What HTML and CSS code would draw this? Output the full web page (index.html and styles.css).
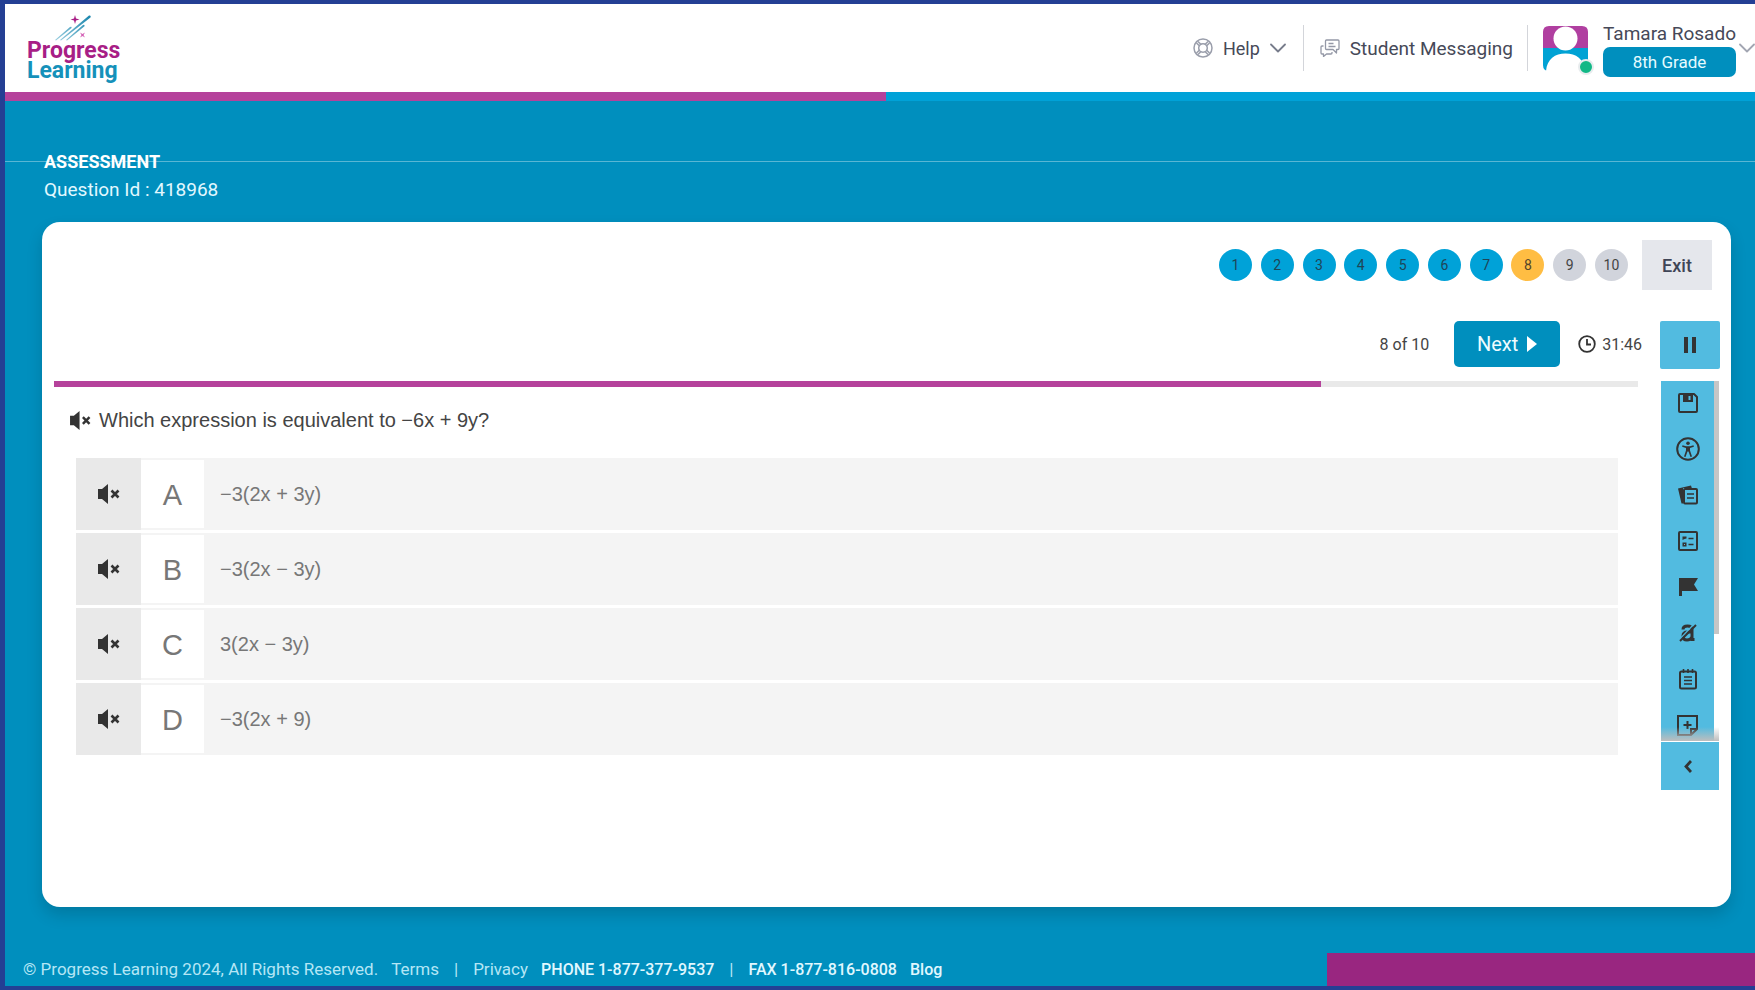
FILE: index.html
```html
<!DOCTYPE html>
<html lang="en">
<head>
<meta charset="utf-8">
<title>Progress Learning - Assessment</title>
<link rel="stylesheet" href="styles.css">
</head>
<body>
<svg class="defs" aria-hidden="true">
  <symbol id="mute" viewBox="0 0 22 20">
    <path fill="#333" d="M0 5h4l6-5v20l-6-5H0z"/>
    <path stroke="#333" stroke-width="2.6" fill="none" d="M13.500 6.500l7 7M20.500 6.500l-7 7"/>
  </symbol>
  <symbol id="chevron" viewBox="0 0 16 10">
    <path fill="none" stroke="currentColor" stroke-width="1.800" stroke-linecap="round" stroke-linejoin="round" d="M1 1.500l7 7 7-7"/>
  </symbol>
</svg>
<header class="header">
  <a class="logo" href="#">
    <svg class="logo-art" viewBox="0 0 38 26" aria-hidden="true">
      <defs>
        <linearGradient id="trail" x1="0" y1="1" x2="1" y2="0"><stop offset="0" stop-color="#9ccfe0"/><stop offset="1" stop-color="#1784ac"/></linearGradient>
      </defs>
      <path fill="url(#trail)" d="M0 25L15 12q2-1 1.500 1L1 25.500zM5 25L34 .5q2.500-.5 1.500 2L6 25.500zM11 25L28 10q2-1 1.500 1.200L12 25.500z"/>
      <path fill="#a81e86" d="M20 0l1 3.500 3.500 1-3.500 1-1 3.500-1-3.500-3.500-1 3.500-1z"/>
      <path fill="#d35fb5" d="M25 17.500l2.500 1.500 2.500-1.500-1.500 2.500 1.500 2.500-2.500-1.500-2.500 1.500 1.500-2.500z"/>
    </svg>
    <span class="logo-top">Progress</span>
    <span class="logo-bottom">Learning</span>
  </a>
  <nav class="nav">
    <button class="nav-item help">
      <svg width="20" height="20" viewBox="0 0 20 20" fill="none" stroke="#9a9eab" stroke-width="1.500" aria-hidden="true"><circle cx="10" cy="10" r="9"/><circle cx="10" cy="10" r="4.300"/><path d="M3.500 5l3.300 3.300M5 3.500l3.300 3.300M15 3.500l-3.300 3.300M16.500 5l-3.300 3.300M16.500 15l-3.300-3.300M15 16.500l-3.300-3.300M5 16.500l3.300-3.300M3.500 15l3.300-3.300"/></svg>
      <span>Help</span>
      <svg class="chev" width="16" height="10"><use href="#chevron"/></svg>
    </button>
    <a class="nav-item messaging" href="#">
      <svg width="20" height="18" viewBox="0 0 20 18" fill="none" stroke="#9498a6" stroke-width="1.300" stroke-linejoin="round" aria-hidden="true"><path d="M6.500 1H18q1 0 1 1v7.500q0 1-1 1h-1.500v3.500l-3.500-3.500H6.500q-1 0-1-1V2q0-1 1-1zM8.500 4.500h5M8.500 7.500h7"/><path d="M5.500 7.500M3.500 7H2q-1 0-1 1v6q0 1 1 1h1.500v2.500l3-2.500H11q1 0 1-1v-1"/></svg>
      <span>Student Messaging</span>
    </a>
    <button class="profile">
      <span class="avatar">
        <svg width="45" height="45" viewBox="0 0 45 45" aria-hidden="true"><path fill="#b03fa0" d="M0 22V6q0-6 6-6h33q6 0 6 6v16z"/><path fill="#00a2d4" d="M0 22h45v17q0 6-6 6H6q-6 0-6-6z"/><circle cx="22.500" cy="12.500" r="12" fill="#fff"/><path fill="#fff" d="M3 45C4 33 12 27.500 22.500 27.500S41 33 42 45z"/></svg>
        <i class="status"></i>
      </span>
      <span class="who"><span class="name">Tamara Rosado</span><span class="grade">8th Grade</span></span>
      <svg class="chev" width="16" height="10"><use href="#chevron"/></svg>
    </button>
  </nav>
</header>
<div class="stripe"></div>
<main class="main">
  <h1 class="title">ASSESSMENT</h1>
  <p class="qid">Question Id : 418968</p>
  <section class="card">
    <div class="top-row">
      <div class="pager">
        <button class="dot">1</button><button class="dot">2</button><button class="dot">3</button><button class="dot">4</button><button class="dot">5</button><button class="dot">6</button><button class="dot">7</button><button class="dot current">8</button><button class="dot todo">9</button><button class="dot todo">10</button>
      </div>
      <button class="exit">Exit</button>
    </div>
    <div class="work">
      <div class="content">
        <div class="controls">
          <span>8 of 10</span>
          <button class="next">Next <svg width="10" height="16" viewBox="0 0 10 16" aria-hidden="true"><path fill="#fff" d="M0 0l10 8-10 8z"/></svg></button>
          <span class="timer"><svg width="18" height="18" viewBox="0 0 18 18" fill="none" stroke="#333" stroke-width="1.800" aria-hidden="true"><circle cx="9" cy="9" r="7.800"/><path d="M9 4v5.500h4"/></svg>31:46</span>
        </div>
        <div class="progress"><div class="progress-fill"></div></div>
        <div class="question">
          <button class="speak" aria-label="Read question"><svg width="21" height="19"><use href="#mute"/></svg></button>
          <h2>Which expression is equivalent to −6x + 9y?</h2>
        </div>
        <ul class="options">
          <li class="option"><button class="speak" aria-label="Read A"><svg width="22" height="20"><use href="#mute"/></svg></button><button class="choice"><span class="letter">A</span><span class="answer">−3(2x + 3y)</span></button></li>
          <li class="option"><button class="speak" aria-label="Read B"><svg width="22" height="20"><use href="#mute"/></svg></button><button class="choice"><span class="letter">B</span><span class="answer">−3(2x − 3y)</span></button></li>
          <li class="option"><button class="speak" aria-label="Read C"><svg width="22" height="20"><use href="#mute"/></svg></button><button class="choice"><span class="letter">C</span><span class="answer">3(2x − 3y)</span></button></li>
          <li class="option"><button class="speak" aria-label="Read D"><svg width="22" height="20"><use href="#mute"/></svg></button><button class="choice"><span class="letter">D</span><span class="answer">−3(2x + 9)</span></button></li>
        </ul>
      </div>
      <aside class="side">
        <button class="pause" aria-label="Pause"><svg width="12" height="16" viewBox="0 0 12 16"><path fill="#333" d="M0 0h4v16H0zM8 0h4v16H8z"/></svg></button>
        <div class="tools">
          <div class="tool-list">
            <button aria-label="Save"><svg width="20" height="20" viewBox="0 0 20 20"><path fill="none" stroke="#333" stroke-width="2" stroke-linejoin="round" d="M2 1h14l3 3v14q0 1-1 1H2q-1 0-1-1V2q0-1 1-1z"/><path fill="#333" fill-rule="evenodd" d="M5 1h10v8H5zM10.500 3v4h2V3z"/></svg></button>
            <button aria-label="Accessibility"><svg width="24" height="24" viewBox="0 0 24 24"><circle cx="12" cy="12" r="10.800" fill="none" stroke="#333" stroke-width="2"/><circle cx="12" cy="6.300" r="1.800" fill="#333"/><path fill="#333" d="M6.500 8.300l3.500.9h4l3.500-.9.4 1.400-3.900 1.300v2.500l2 6-1.500.5-2-5.500h-1l-2 5.500L8 19.500l2-6V11L6.100 9.700z"/></svg></button>
            <button aria-label="Reference sheets"><svg width="20" height="20" viewBox="0 0 20 20"><path fill="#333" d="M0 3.500L13 .5l.8 2.500H5v15.500H3.500z"/><rect x="6" y="4" width="13" height="14.500" rx="1" fill="none" stroke="#333" stroke-width="2"/><path stroke="#333" stroke-width="1.600" d="M9 9h7M9 13h7"/></svg></button>
            <button aria-label="Rubric"><svg width="20" height="20" viewBox="0 0 20 20"><rect x="1" y="1" width="18" height="18" rx="1" fill="none" stroke="#333" stroke-width="2"/><path stroke="#333" stroke-width="1.600" d="M10.500 7.500h5M10.500 13.500h5"/><path fill="#333" fill-rule="evenodd" d="M4.500 5.500h4v2l-2 .5-2 1zM4.500 11.500h4v4h-4zM6 13v1h1v-1z"/></svg></button>
            <button aria-label="Flag"><svg width="20" height="20" viewBox="0 0 20 20"><path fill="#333" d="M1 1h19l-4 6.500 4 6.500H4v5H1z"/></svg></button>
            <button aria-label="Strike out"><svg width="18" height="18" viewBox="0 0 18 18"><path fill="none" stroke="#333" stroke-width="3" d="M4 5.500Q4 2 8.500 2T13 5.500V15.500h2.500M13 8H8.500q-4.500 0-4.500 4t4 4q3.500 0 5-3"/><path stroke="#52bbe0" stroke-width="1.300" d="M0 16L15 0"/><path stroke="#333" stroke-width="2" d="M1 17L17 1"/></svg></button>
            <button aria-label="Notepad"><svg width="20" height="22" viewBox="0 0 20 22"><rect x="2" y="3.500" width="16" height="17" rx="1.500" fill="none" stroke="#333" stroke-width="2"/><path stroke="#333" stroke-width="1.600" d="M5.500 1v4M10 1v4M14.500 1v4M6 9h8M6 12.500h8M6 16h8"/></svg></button>
            <button aria-label="Add note"><svg width="21" height="21" viewBox="0 0 21 21"><path fill="none" stroke="#333" stroke-width="2" d="M1 1h19v13l-6 6H1zM20 14h-6v6"/><path stroke="#333" stroke-width="2" d="M10.500 6v8M6.500 10h8"/></svg></button>
          </div>
          <div class="scrollbar"></div>
        </div>
        <button class="collapse" aria-label="Collapse"><svg width="8" height="13" viewBox="0 0 8 13"><path fill="none" stroke="#333" stroke-width="2.800" d="M7 1L2 6.500 7 12"/></svg></button>
      </aside>
    </div>
  </section>
</main>
<footer class="footer">
  <span>© Progress Learning 2024, All Rights Reserved.</span>
  <a href="#">Terms</a><span class="sep">|</span><a href="#">Privacy</a>
  <span class="contact">PHONE 1-877-377-9537</span><span class="sep">|</span><span class="contact">FAX 1-877-816-0808</span><a class="contact" href="#">Blog</a>
</footer>
<div class="dock"></div>
</body>
</html>
```
FILE: styles.css
```css
* { box-sizing: border-box; }
body {
  margin: 0;
  min-height: 100vh;
  display: flex;
  flex-direction: column;
  position: relative;
  overflow-x: hidden;
  border: solid #243f94;
  border-width: 4px 0 4px 5px;
  background: #008fbe;
  font-family: Roboto, "Liberation Sans", sans-serif;
  font-size: 16px;
  color: #444;
}
/* hairline rule running across the whole page */
body::after {
  content: "";
  position: absolute;
  top: 157px;
  left: -5px;
  right: 0;
  height: 1px;
  background: rgba(255, 255, 255, .35);
}
button { font: inherit; color: inherit; border: 0; padding: 0; background: none; cursor: pointer; }
a { color: inherit; text-decoration: none; }
svg { display: block; flex: none; }
.defs { position: absolute; width: 0; height: 0; }

.header {
  height: 88px;
  flex: none;
  display: flex;
  align-items: center;
  justify-content: space-between;
  background: #fff;
}
.logo { display: flex; flex-direction: column; margin-left: 22px; font-size: 23px; font-weight: 700; line-height: 20px; }
.logo-art { width: 38px; height: 26px; margin-left: 28px; }
.logo-top { color: #a81e86; }
.logo-bottom { color: #1591ba; }
.nav { display: flex; align-items: center; font-size: 19px; color: #464958; }
.nav-item { display: flex; align-items: center; height: 46px; border-right: 1px solid #d3d5da; }
.help { gap: 10px; padding-right: 17px; font-size: 18px; }
.messaging { gap: 10px; padding: 0 14px 0 16px; }
.chev { color: #777c8b; }
.profile { display: flex; align-items: center; padding-left: 15px; }
.profile .chev { margin-left: 3px; color: #a2a6b2; }
.avatar { position: relative; margin-right: 15px; }
.status {
  position: absolute;
  right: -6px;
  bottom: -4px;
  width: 16px;
  height: 16px;
  border: 2px solid #e8ecee;
  border-radius: 50%;
  background: #12b886;
}
.who { display: flex; flex-direction: column; margin-top: 2px; }
.name { line-height: 26px; }
.grade { border-radius: 7px; background: #008fbe; color: #e6fbff; font-size: 17px; line-height: 30px; text-align: center; }
.stripe { height: 9px; flex: none; background: linear-gradient(90deg, #b5429b 0 50.350%, #00a2d8 50.350%); }

.main { flex: 1; display: flex; flex-direction: column; padding: 48px 24px 0 37px; }
.title { margin: 0 2px; font-size: 18px; line-height: 26px; color: #fff; }
.qid { margin: 0 2px 17px; font-size: 19px; line-height: 30px; color: #e2f8ff; }
.card {
  flex: 1;
  padding: 18px 11px 20px 12px;
  border-radius: 18px;
  background: #fff;
  box-shadow: 0 8px 16px rgba(0, 0, 0, .15);
}
.top-row { display: flex; justify-content: flex-end; align-items: center; gap: 14px; padding-right: 8px; }
.pager { display: flex; justify-content: space-between; width: 409px; }
.dot { width: 33px; height: 32px; border-radius: 50%; background: #00a2d8; font-size: 14px; color: #1f4557; }
.current { background: #ffbd43; color: #54452b; }
.todo { background: #d1d4dc; color: #444; }
.exit { width: 70px; height: 50px; background: #e5e7ec; font-size: 18px; font-weight: 500; color: #3f4556; }

.work { display: flex; gap: 18px; margin-top: 31px; }
.content { flex: 1; }
.controls { display: flex; justify-content: flex-end; align-items: center; gap: 18px; height: 46px; }
.next {
  display: flex;
  align-items: center;
  justify-content: center;
  gap: 9px;
  width: 106px;
  height: 46px;
  border-radius: 5px;
  background: #008fbe;
  color: #eefcff;
  font-size: 20px;
}
.controls > span:first-child { margin-right: 7px; }
.timer { display: flex; align-items: center; gap: 6px; }
.progress { height: 6px; margin: 14px 4px 0 0; background: #e9e9e9; }
.progress-fill { width: 80%; height: 100%; background: #b5429b; }
.question { display: flex; align-items: center; gap: 8px; margin: 21px 0 26px 16px; }
.question h2 { margin: 0; font: 400 20px/24px "Liberation Sans", Arial, sans-serif; color: #444; }
.options { display: flex; flex-direction: column; gap: 3px; margin: 0 24px 0 22px; padding: 0; list-style: none; }
.option { display: flex; height: 72px; background: #f4f4f4; }
.option .speak { display: grid; place-items: center; width: 65px; background: #e9e9e9; }
.choice { flex: 1; display: flex; align-items: center; font-family: "Liberation Sans", Arial, sans-serif; color: #777; text-align: left; }
.letter { width: 63px; height: 68px; background: #fff; font-size: 29px; line-height: 70px; text-align: center; }
.answer { padding-left: 16px; font-size: 20px; }

.side { width: 60px; }
.side button { display: grid; place-items: center; background: #52bbe0; }
.pause { width: 60px; height: 48px; border-radius: 2px; }
.tools { position: relative; width: 58px; height: 360px; margin: 12px 1px 0; overflow: hidden; }
.tool-list { display: flex; flex-direction: column; gap: 2px; width: 53px; background: #52bbe0; }
.tool-list button { height: 44px; flex: none; }
.scrollbar { position: absolute; top: 0; right: 0; width: 5px; height: 253px; background: #c6c6c6; }
.tools::after {
  content: "";
  position: absolute;
  inset: auto 0 0;
  height: 14px;
  background: linear-gradient(rgba(190, 190, 190, 0), #bebebe);
}
.side .collapse { width: 58px; height: 48px; margin: 1px 1px 0; padding-right: 4px; }

.footer { display: flex; align-items: center; gap: 13px; padding: 49px 18px 3px; font-size: 17px; line-height: 27px; color: #b4e6f5; }
.sep { margin: 0 2px; }
.contact { font-size: 16px; font-weight: 500; color: #e0f8ff; }
.dock { position: absolute; right: 0; bottom: 0; width: 428px; height: 33px; background: #992680; }
```
